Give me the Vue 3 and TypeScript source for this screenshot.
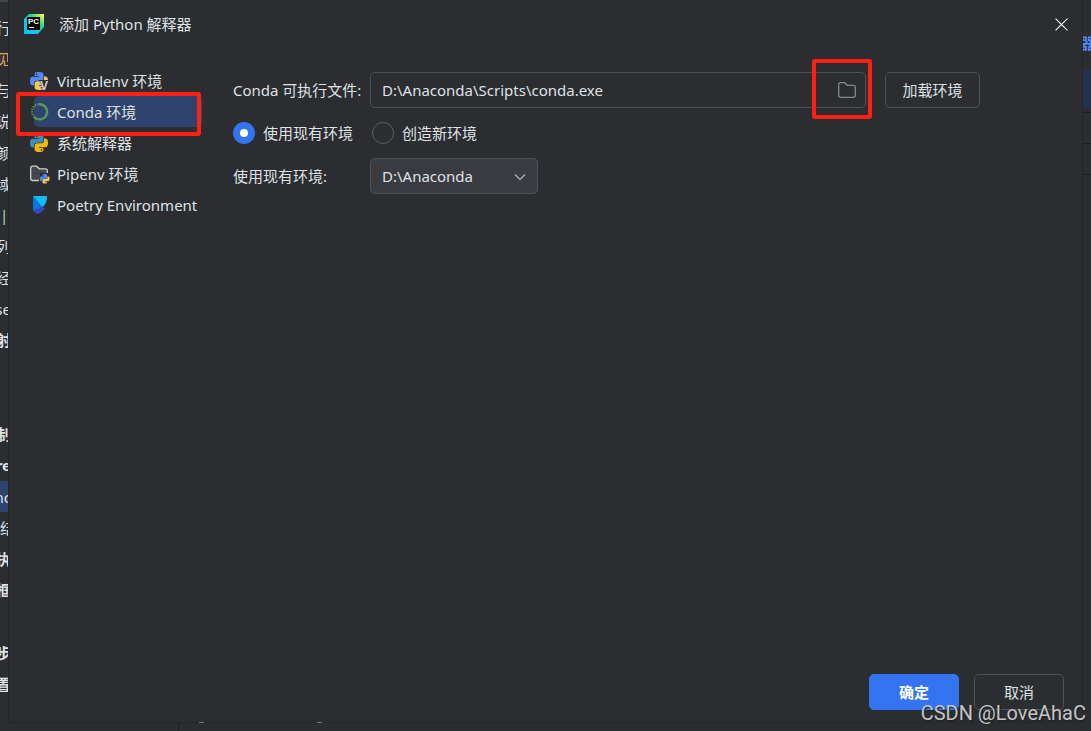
<script setup lang="ts">
import { ref } from 'vue'

type IconName = 'virtualenv' | 'conda' | 'python' | 'pipenv' | 'poetry'

interface Kind {
  id: IconName
  label: string
}

interface BackRow {
  text: string
  bold?: boolean
  selected?: boolean
  tone?: 'orange' | 'green'
  start?: boolean
}

const kinds: Kind[] = [
  { id: 'virtualenv', label: 'Virtualenv 环境' },
  { id: 'conda', label: 'Conda 环境' },
  { id: 'python', label: '系统解释器' },
  { id: 'pipenv', label: 'Pipenv 环境' },
  { id: 'poetry', label: 'Poetry Environment' },
]

const backRows: BackRow[] = [
  { text: '行' },
  { text: '见', tone: 'orange' },
  { text: '点与' },
  { text: '说' },
  { text: '颜' },
  { text: '域' },
  { text: '|', tone: 'green', start: true },
  { text: '列' },
  { text: '经' },
  { text: 'se' },
  { text: '射', bold: true },
  { text: '' },
  { text: '' },
  { text: '制', bold: true },
  { text: 're', bold: true },
  { text: 'nc', selected: true },
  { text: '结', start: true },
  { text: '执', bold: true },
  { text: '框', bold: true },
  { text: '' },
  { text: '步', bold: true },
  { text: '置', bold: true },
  { text: '' },
]

const pythonHalf =
  'M14.25.18l.9.2.73.26.59.3.45.32.34.34.25.34.16.33.1.3.04.26.02.2-.01.13V8.5l-.05.63-.13.55-.21.46-.26.38-.3.31-.33.25-.35.19-.35.14-.33.1-.3.07-.26.04-.21.02H8.77l-.69.05-.59.14-.5.22-.41.27-.33.32-.27.35-.2.36-.15.37-.1.35-.07.32-.04.27-.02.21v3.06H3.17l-.21-.03-.28-.07-.32-.12-.35-.18-.36-.26-.36-.36-.35-.46-.32-.59-.28-.73-.21-.88-.14-1.05-.05-1.23.06-1.22.16-1.04.24-.87.32-.71.36-.57.4-.44.42-.33.42-.24.4-.16.36-.1.32-.05.24-.01h.16l.06.01h8.16v-.83H6.18l-.01-2.75-.02-.37.05-.34.11-.31.17-.28.25-.26.31-.23.38-.2.44-.18.51-.15.58-.12.64-.1.71-.06.77-.04.84-.02 1.27.05zm-6.3 1.98l-.23.33-.08.41.08.41.23.34.33.22.41.09.41-.09.33-.22.23-.34.08-.41-.08-.41-.23-.33-.33-.22-.41-.09-.41.09z'

const activeKind = ref<IconName>('conda')
const mode = ref<'existing' | 'new'>('existing')
const condaPath = ref('D:\\Anaconda\\Scripts\\conda.exe')
const environment = ref('D:\\Anaconda')
</script>

<template>
  <div class="screen">
    <aside class="back-left" aria-hidden="true">
      <div
        v-for="(row, i) in backRows"
        :key="i"
        class="back-row"
        :class="[{ bold: row.bold, selected: row.selected, start: row.start }, row.tone]"
      >
        <span>{{ row.text }}</span>
      </div>
    </aside>

    <main class="dialog" role="dialog" aria-labelledby="dialog-title">
      <header class="title-bar">
        <svg class="app-icon" viewBox="0 0 20 20" aria-hidden="true">
          <defs>
            <linearGradient id="pc-cool" x1="0" y1="1" x2="1" y2="0">
              <stop offset="0.3" stop-color="#07c3f2" />
              <stop offset="0.65" stop-color="#21d789" />
              <stop offset="0.95" stop-color="#fcf84a" />
            </linearGradient>
          </defs>
          <path d="M5 0H20V13L14 20H0V5Z" fill="url(#pc-cool)" />
          <rect x="3" y="3" width="13" height="13" fill="#000" />
          <text x="4" y="10" class="icon-pc">PC</text>
          <rect x="5" y="13" width="5" height="1" fill="#fff" />
        </svg>
        <h1 id="dialog-title">添加 Python 解释器</h1>
        <button class="close" type="button" aria-label="关闭">
          <svg viewBox="0 0 12 12" aria-hidden="true">
            <path d="M0.5 0.5L11.5 11.5M11.5 0.5L0.5 11.5" stroke="#fff" stroke-width="1" />
          </svg>
        </button>
      </header>

      <div class="body">
        <nav class="kinds">
          <button
            v-for="kind in kinds"
            :key="kind.id"
            type="button"
            class="kind"
            :class="{ active: kind.id === activeKind }"
            @click="activeKind = kind.id"
          >
            <svg v-if="kind.id === 'virtualenv'" class="kind-icon" viewBox="0 0 20 20" aria-hidden="true">
              <g transform="translate(0 1) scale(.75)">
                <path :d="pythonHalf" fill="#548af7" />
                <path :d="pythonHalf" fill="#f2c55c" transform="rotate(180 12 12)" />
              </g>
              <path d="M9 9H20V20H14Z" fill="#2b2d30" />
              <text x="10" y="19" class="icon-v">V</text>
            </svg>
            <svg v-else-if="kind.id === 'conda'" class="kind-icon" viewBox="0 0 20 20" aria-hidden="true">
              <path d="M9 2.2A7.6 7.6 0 1 1 4.3 15.3" fill="none" stroke="#57965c" stroke-width="2.4" />
              <path d="M4.6 15.2A7.4 7.4 0 0 1 9 2.2" fill="none" stroke="#57965c" stroke-width="2.4" stroke-dasharray="1.4 1.2" />
            </svg>
            <svg v-else-if="kind.id === 'python'" class="kind-icon" viewBox="0 0 20 20" aria-hidden="true">
              <g transform="translate(0 1) scale(.75)">
                <path :d="pythonHalf" fill="#3d8fb8" />
                <path :d="pythonHalf" fill="#f0b90f" transform="rotate(180 12 12)" />
              </g>
            </svg>
            <svg v-else-if="kind.id === 'pipenv'" class="kind-icon" viewBox="0 0 20 20" aria-hidden="true">
              <path
                d="M9 16.5H2.5A1.8 1.8 0 0 1 .7 14.7V4A1.8 1.8 0 0 1 2.5 2.2H6.5L9.3 4.8H15.5A1.8 1.8 0 0 1 17.3 6.6V9"
                fill="#43454a"
                stroke="#ced0d6"
                stroke-width="1.3"
              />
              <path d="M10 9H19V19H10Z" fill="#2b2d30" />
              <g transform="translate(10 10) scale(.4)">
                <path :d="pythonHalf" fill="#548af7" />
                <path :d="pythonHalf" fill="#f2c55c" transform="rotate(180 12 12)" />
              </g>
            </svg>
            <svg v-else class="kind-icon" viewBox="0 0 20 20" aria-hidden="true">
              <path d="M3 1L13 11.5Q9 15 3 15.8Z" fill="#0a73dc" />
              <path d="M3 1H17Q17.5 8 12.5 12Z" fill="#13bdf0" />
              <path d="M3 15.8Q9 15 12.8 11.8L15 13.2Q12 17.5 7 19Z" fill="#3b45c4" />
            </svg>
            <span>{{ kind.label }}</span>
            <i v-if="kind.id === 'conda'" class="mark mark-kind"></i>
          </button>
        </nav>

        <form class="form" @submit.prevent>
          <label class="field-label" for="conda-path">Conda 可执行文件:</label>
          <div class="path-row">
            <div class="path-box">
              <input id="conda-path" v-model="condaPath" type="text" spellcheck="false" />
              <button class="browse" type="button" aria-label="浏览">
                <svg viewBox="0 0 18 16" aria-hidden="true">
                  <path
                    d="M2.5 .7H6.5L9.3 3.3H15.5A1.8 1.8 0 0 1 17.3 5.1V13.5A1.8 1.8 0 0 1 15.5 15.3H2.5A1.8 1.8 0 0 1 .7 13.5V2.5A1.8 1.8 0 0 1 2.5 .7Z"
                    fill="none"
                    stroke="#84878d"
                    stroke-width="1.3"
                  />
                </svg>
              </button>
              <i class="mark mark-browse"></i>
            </div>
            <button class="btn load" type="button">加载环境</button>
          </div>

          <div class="modes">
            <label><input v-model="mode" type="radio" name="mode" value="existing" />使用现有环境</label>
            <label><input v-model="mode" type="radio" name="mode" value="new" />创造新环境</label>
          </div>

          <label class="field-label" for="environment">使用现有环境:</label>
          <div class="select-box">
            <select id="environment" v-model="environment">
              <option>D:\Anaconda</option>
            </select>
            <svg viewBox="0 0 12 8" aria-hidden="true">
              <path d="M1 1.5L6 6.5L11 1.5" fill="none" stroke="#b4b8bf" stroke-width="1.2" />
            </svg>
          </div>
        </form>
      </div>

      <footer class="actions">
        <button class="btn primary" type="button">确定</button>
        <button class="btn" type="button">取消</button>
      </footer>
    </main>

    <aside class="back-right" aria-hidden="true">
      <span class="back-link">器</span>
      <div class="back-selected"></div>
      <div class="back-line"></div>
      <div class="back-line"></div>
      <div class="back-line"></div>
    </aside>

    <div class="back-bottom" aria-hidden="true">
      <i class="divider"></i>
      <i class="tick"></i>
      <i class="tick"></i>
    </div>
    <span class="watermark">CSDN @LoveAhaC</span>
  </div>
</template>

<style>
body {
  margin: 0;
  background: #2b2d30;
}
</style>

<style scoped>
.screen {
  position: relative;
  display: grid;
  grid-template-columns: 8px minmax(0, 1fr) 8px;
  grid-template-rows: minmax(0, 1fr) 8px;
  height: 100vh;
  overflow: hidden;
  box-sizing: border-box;
  background: #2b2d30;
  color: #dfe1e5;
  font: 15px/20px "Noto Sans", "Noto Sans CJK SC", sans-serif;
}

button,
input,
select {
  font: inherit;
  color: inherit;
}

.back-left {
  grid-row: 1 / 3;
  display: grid;
  grid-template-rows: repeat(23, minmax(0, 1fr));
  padding-top: 10px;
  border-top: 2px solid #43454a;
  overflow: hidden;
}

.back-row {
  display: flex;
  align-items: center;
  justify-content: flex-end;
  overflow: hidden;
}

.back-row span {
  flex: none;
  margin-right: -3px;
}

.back-row.start {
  justify-content: flex-start;
}

.bold {
  font-weight: 700;
}

.orange {
  color: #e0a868;
}

.green {
  color: #a5dcc0;
}

.selected {
  background: #2e436e;
}

.dialog {
  display: flex;
  flex-direction: column;
  box-sizing: border-box;
  border: 1px solid #26272a;
  border-top: 0;
}

.title-bar {
  display: flex;
  align-items: center;
  height: 48px;
  padding: 0 14px 0 15px;
}

.app-icon {
  width: 20px;
  height: 20px;
}

.icon-pc {
  fill: #fff;
  font: 700 8px "Liberation Sans", sans-serif;
}

.icon-v {
  fill: #ced0d6;
  font: 700 12px "Liberation Sans", sans-serif;
}

h1 {
  flex: 1;
  margin: 0 0 0 15px;
  font: inherit;
}

.close {
  display: flex;
  padding: 0;
  border: 0;
  background: none;
}

.close svg {
  width: 13px;
  height: 13px;
}

.body {
  flex: 1;
  display: flex;
  gap: 31px;
  padding: 17px 102px 0 21px;
}

.kinds {
  flex: none;
  width: 172px;
}

.kind {
  position: relative;
  display: flex;
  align-items: center;
  gap: 7px;
  width: 100%;
  height: 31px;
  padding: 0;
  border: 0;
  background: none;
  white-space: nowrap;
  text-align: left;
}

.kind.active {
  z-index: 1;
}

.kind.active::before {
  content: "";
  position: absolute;
  z-index: -1;
  inset: 0 0 0 4px;
  border-radius: 5px;
  background: #2e436e;
}

.kind-icon {
  flex: none;
  width: 20px;
  height: 20px;
}

.mark {
  position: absolute;
  border: 4px solid #ff2012;
  border-radius: 3px;
  pointer-events: none;
}

.mark-kind {
  inset: -4px 1px -9px -14px;
}

.mark-browse {
  top: -14px;
  right: -7px;
  bottom: -12px;
  width: 52px;
}

.form {
  flex: 1;
  display: grid;
  grid-template-columns: 137px minmax(0, 1fr);
  grid-template-rows: 36px 22px 36px;
  row-gap: 14px;
  align-content: start;
  align-items: center;
  padding-top: 7px;
}

.field-label {
  white-space: nowrap;
}

.path-row {
  display: flex;
  gap: 19px;
}

.path-box {
  position: relative;
  flex: 1;
  display: flex;
  align-items: center;
  box-sizing: border-box;
  height: 36px;
  padding: 0 9px 0 11px;
  border: 1px solid #4e5157;
  border-radius: 5px;
}

.path-box input {
  flex: 1;
  min-width: 0;
  padding: 0;
  border: 0;
  outline: 0;
  background: none;
}

.browse {
  display: flex;
  padding: 0;
  border: 0;
  background: none;
}

.browse svg {
  width: 18px;
  height: 16px;
}

.btn {
  box-sizing: border-box;
  width: 90px;
  height: 36px;
  padding: 0;
  border: 1px solid #4e5157;
  border-radius: 5px;
  background: none;
}

.load {
  width: 95px;
}

.modes {
  grid-column: 1 / 3;
  display: flex;
  gap: 19px;
}

.modes label {
  display: flex;
  align-items: center;
  gap: 8px;
}

.modes input {
  appearance: none;
  box-sizing: border-box;
  width: 22px;
  height: 22px;
  margin: 0;
  border: 1px solid #5a5d63;
  border-radius: 50%;
}

.modes input:checked {
  border: 7px solid #3574f0;
  background: #fff;
}

.select-box {
  position: relative;
  width: 168px;
}

.select-box select {
  appearance: none;
  display: block;
  box-sizing: border-box;
  width: 100%;
  height: 36px;
  padding: 0 32px 0 11px;
  border: 1px solid #4e5157;
  border-radius: 5px;
  background: #393b40;
}

.select-box svg {
  position: absolute;
  top: 15px;
  right: 12px;
  width: 12px;
  height: 8px;
  pointer-events: none;
}

.actions {
  display: flex;
  justify-content: flex-end;
  gap: 15px;
  padding: 0 18px 12px;
}

.primary {
  border-color: #3574f0;
  background: #3574f0;
  color: #fff;
  font-weight: 700;
}

.back-right {
  overflow: hidden;
  padding-top: 33px;
}

.back-link {
  display: block;
  margin-left: -3px;
  color: #548af7;
  font-weight: 700;
}

.back-selected {
  height: 39px;
  margin: 17px 0 3px;
  background: #25324d;
}

.back-line {
  height: 30px;
  border-top: 1px solid #1e1f22;
}

.back-bottom {
  grid-column: 2 / 4;
  display: flex;
}

.divider {
  width: 1px;
  margin-left: 170px;
  background: #1e1f22;
}

.tick {
  width: 5px;
  height: 1px;
  margin: -1px 93px 0 20px;
  background: #6f737a;
}

.watermark {
  position: absolute;
  right: 5px;
  bottom: 6px;
  color: #c4c5c6;
  font: 20px/24px Roboto, sans-serif;
  text-shadow: 1px 1px 1px #1e1f22;
}
</style>
